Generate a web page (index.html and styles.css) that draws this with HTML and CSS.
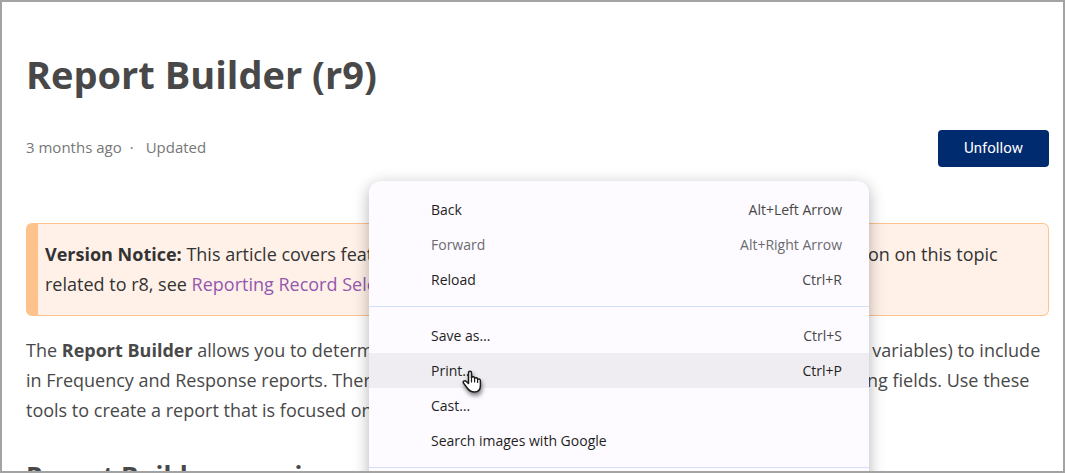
FILE: index.html
```
<!DOCTYPE html>
<html lang="en">
<head>
    <meta charset="UTF-8">
    <meta name="viewport" content="width=device-width, initial-scale=1.0">
    <title>Report Builder (r9)</title>
    <link rel="stylesheet" href="styles.css">
</head>
<body>
    <main class="page">
        <h1>Report Builder (r9)</h1>

        <div class="article-meta">
            <div class="meta-data">
                <span>3 months ago</span>
                <span class="dot">·</span>
                <span>Updated</span>
            </div>
            <button class="follow-button" type="button">Unfollow</button>
        </div>

        <div class="notice">
            <strong>Version Notice:</strong> This article covers features available in version r9.0 of Engage. For more information on this topic related to r8, see <a href="#record-selection">Reporting Record Selection</a>.
        </div>

        <p>The <strong>Report Builder</strong> allows you to determine which records and which columns, questions, scales (or variables) to include in Frequency and Response reports. There are now several tools for selecting, hiding and also grouping fields. Use these tools to create a report that is focused on your needs.</p>

        <h2>Report Builder overview</h2>
    </main>

    <!-- context menu -->
    <div class="context-menu" role="menu">
        <button class="menu-item" role="menuitem"><span>Back</span><kbd>Alt+Left Arrow</kbd></button>
        <button class="menu-item" role="menuitem" disabled><span>Forward</span><kbd>Alt+Right Arrow</kbd></button>
        <button class="menu-item" role="menuitem"><span>Reload</span><kbd>Ctrl+R</kbd></button>
        <hr>
        <button class="menu-item" role="menuitem"><span>Save as…</span><kbd>Ctrl+S</kbd></button>
        <button class="menu-item active" role="menuitem"><span>Print…</span><kbd>Ctrl+P</kbd></button>
        <button class="menu-item" role="menuitem"><span>Cast…</span></button>
        <button class="menu-item" role="menuitem"><span>Search images with Google</span></button>
        <hr>
    </div>

    <!-- hand pointer -->
    <svg class="pointer" width="20" height="24" viewBox="0 0 20 24">
        <path d="M6.5 13.5V2.8C6.5.6 9.5.6 9.5 2.8V7.5C10.5 6.3 12.6 6.7 12.6 8.3C13.7 7.2 15.6 7.7 15.6 9.3C17 8.5 18.4 9.2 18.4 10.8V15.5C18.4 19.5 16 22 12.4 22C8.8 22 7 20.7 5.2 18L1.6 13.3C.3 11.4 2.6 9.9 4 11.2Z" fill="#fff" stroke="#1b1b1b" stroke-width="1.5" stroke-linejoin="round"/>
        <path d="M9.5 7V12M12.6 8.3V12M15.6 9.3V12.5" fill="none" stroke="#1b1b1b" stroke-width="1.2" stroke-linecap="round"/>
    </svg>
</body>
</html>
```
FILE: styles.css
```
* {
    box-sizing: border-box;
}

body {
    position: relative;
    height: 100vh;
    margin: 0;
    border: 2px solid #a3a3a3;
    overflow: hidden;
    font-family: "Open Sans", "Noto Sans", sans-serif;
    color: #484848;
    background-color: #fff;
}

.page {
    padding: 42px 14px 0 24px;
    font-size: 18px;
    line-height: 30px;
}

h1 {
    margin: 0;
    font-size: 38px;
    line-height: 60px;
}

h2 {
    margin: 31px 0 0;
    font-size: 26px;
    line-height: 40px;
}

p {
    margin: 19px 0 0;
}

.article-meta {
    display: flex;
    justify-content: space-between;
    align-items: flex-start;
    margin-top: 26px;
}

.meta-data {
    display: flex;
    gap: 8px;
    padding-top: 2px;
    font-size: 15px;
    color: #777;
}

.dot {
    margin-right: 4px;
}

.follow-button {
    padding: 8px 26px;
    border: 0;
    border-radius: 4px;
    font-family: Roboto, sans-serif;
    font-size: 15px;
    line-height: 21px;
    color: #fff;
    background-color: #002b6f;
    cursor: pointer;
}

.notice {
    margin-top: 56px;
    padding: 15px 18px 16px 7px;
    border: 1px solid #fec38d;
    border-left-width: 12px;
    border-radius: 6px;
    color: #333;
    background-color: #fff1e7;
}

.notice a {
    color: #9358b0;
    text-decoration: none;
}

.context-menu {
    position: absolute;
    top: 179px;
    left: 367px;
    width: 500px;
    padding: 11px 0;
    border-radius: 12px;
    background-color: #fdfbff;
    box-shadow: 0 4px 16px rgba(0, 0, 0, 0.3);
}

.menu-item {
    display: flex;
    justify-content: space-between;
    align-items: center;
    width: 100%;
    height: 35px;
    padding: 0 27px 0 62px;
    border: 0;
    font-family: inherit;
    font-size: 14px;
    color: #1f1f1f;
    background: none;
}

.menu-item kbd {
    font-family: inherit;
    color: #474747;
}

.menu-item:disabled,
.menu-item:disabled kbd {
    color: #6b6b6f;
}

.menu-item.active {
    background-color: #efedf2;
}

.menu-item.active kbd {
    color: #1f1f1f;
}

.context-menu hr {
    margin: 9px 0 11px;
    border: 0;
    border-top: 1px solid #d3e0fb;
}

.pointer {
    position: absolute;
    top: 368px;
    left: 460px;
    filter: drop-shadow(1px 3px 2px rgba(0, 0, 0, 0.5));
}
```
